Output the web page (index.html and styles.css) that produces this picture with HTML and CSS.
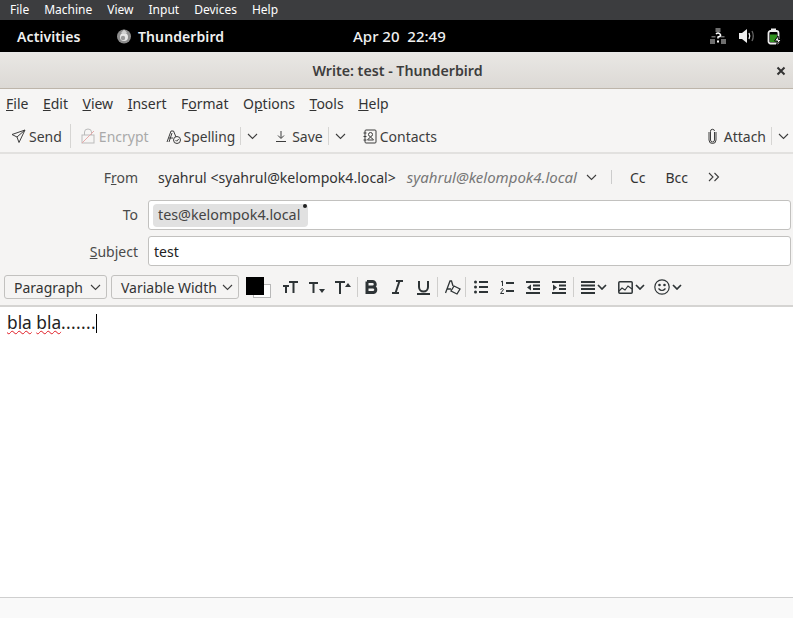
FILE: index.html
```html
<!DOCTYPE html>
<html lang="en">
<head>
<meta charset="utf-8">
<title>Write: test - Thunderbird</title>
<link rel="stylesheet" href="styles.css">
</head>
<body>
<div class="vm-menu">
  <span>File</span><span>Machine</span><span>View</span><span>Input</span><span>Devices</span><span>Help</span>
</div>
<div class="panel">
  <span class="activities">Activities</span>
  <span class="app">
    <svg class="app-icon" width="16" height="16" viewBox="0 0 16 16"><circle cx="8" cy="8.500" r="7" fill="#8d8d8d"/><circle cx="8" cy="9" r="4" fill="#e8e8e8"/><path d="M8 1.500l3 3-2.500 1.500L5 5z" fill="#d0d0d0"/><circle cx="7" cy="10" r="2.200" fill="#9a9a9a"/></svg>
    <span>Thunderbird</span>
  </span>
  <span class="clock">Apr 20&nbsp; 22:49</span>
  <span class="tray">
    <svg width="16" height="16" viewBox="0 0 16 16" fill="#6e6e6e"><rect x="5.500" y="0" width="5" height="4"/><rect x="0" y="11" width="5" height="5"/><rect x="11" y="11" width="5" height="5"/><rect x="1.500" y="8" width="4" height="1.500"/><rect x="10.500" y="8" width="4" height="1.500"/><path d="M6 6q2-2 4 0t-2 3v1.500" stroke="#fff" stroke-width="1.500" fill="none"/><rect x="7" y="12.500" width="2" height="2" fill="#fff"/></svg>
    <svg width="17" height="16" viewBox="0 0 17 16"><path d="M1 5h3l5-4v14l-5-4H1z" fill="#eee"/><path d="M11 5q1.500 3 0 6" stroke="#eee" stroke-width="1.300" fill="none"/><path d="M14 3q2.500 5 0 10" stroke="#666" stroke-width="1.300" fill="none"/></svg>
    <svg width="15" height="17" viewBox="0 0 15 17"><rect x="1.500" y="3" width="10" height="12.500" rx="2" fill="none" stroke="#eee" stroke-width="1.800"/><rect x="4" y="0.500" width="5" height="2.500" fill="#eee"/><rect x="3" y="6.500" width="7" height="7.500" fill="#2f8f1e"/><path d="M11 8l-3.500 5h3l-1 4 5-5.500h-3z" fill="#eee" stroke="#000" stroke-width="1"/></svg>
  </span>
</div>
<div class="titlebar">
  <span class="title">Write: test - Thunderbird</span>
  <svg class="close" width="10" height="10" viewBox="0 0 10 10"><path d="M1.500 1.500l7 7m0-7l-7 7" stroke="#333" stroke-width="2"/></svg>
</div>
<nav class="menubar">
  <span><u>F</u>ile</span><span><u>E</u>dit</span><span><u>V</u>iew</span><span><u>I</u>nsert</span><span>F<u>o</u>rmat</span><span>O<u>p</u>tions</span><span><u>T</u>ools</span><span><u>H</u>elp</span>
</nav>
<div class="toolbar">
  <span class="tool t-send">
    <svg width="15" height="15" viewBox="0 0 15 15" class="ic"><path d="M14 1L1 5.500l5 2.500 2 5.500zM14 1L6 8" fill="none"/></svg>
    <span>Send</span>
  </span>
  <i class="sep sep-send"></i>
  <span class="tool t-encrypt">
    <svg width="14" height="16" viewBox="0 0 14 16" class="ic ic-off"><rect x="1" y="7" width="12" height="8" fill="none"/><path d="M3.500 7V4a3.500 3 0 0 1 7 0v3" fill="none"/><path d="M1 15L13 3" stroke="#e7a9a9" fill="none"/></svg>
    <span>Encrypt</span>
  </span>
  <span class="tool t-spell">
    <svg width="15" height="15" viewBox="0 0 15 15" class="ic"><path d="M1 13L5 2h2.500l2.500 6M3 9h4" fill="none"/><path d="M3 13l3-9" fill="none"/><circle cx="11" cy="11" r="3.500" fill="none"/><path d="M9.500 11l1.200 1.200 2-2.200" fill="none"/></svg>
    <span class="spell-text">Spelling</span>
  </span>
  <i class="sep sep-spell"></i>
  <svg class="chev chev-spell" width="11" height="7" viewBox="0 0 11 7"><path d="M1 1l4.500 4.500L10 1"/></svg>
  <span class="tool t-save">
    <svg width="12" height="14" viewBox="0 0 12 14" class="ic"><path d="M6 2v7M3 6.500L6 9.500l3-3M1 12.500h10" fill="none"/></svg>
    <span>Save</span>
  </span>
  <i class="sep sep-save"></i>
  <svg class="chev chev-save" width="11" height="7" viewBox="0 0 11 7"><path d="M1 1l4.500 4.500L10 1"/></svg>
  <span class="tool t-contacts">
    <svg width="14" height="15" viewBox="0 0 14 15" class="ic"><rect x="2" y="1" width="11" height="13" rx="1" fill="none"/><path d="M0.500 4h3M0.500 7.500h3M0.500 11h3" fill="none"/><circle cx="7.500" cy="5.500" r="2" fill="none"/><path d="M4.500 11q3-5 6 0z" fill="none"/></svg>
    <span>Contacts</span>
  </span>
  <span class="tool t-attach">
    <svg width="9" height="16" viewBox="0 0 9 16" class="ic"><path d="M6.500 4v8a2 2 0 0 1-4 0V3.500a2 2 0 0 1 4-.5M1 4v8a3.500 3.500 0 0 0 7 0V4" fill="none"/></svg>
    <span>Attach</span>
  </span>
  <i class="sep sep-attach"></i>
  <svg class="chev chev-attach" width="11" height="7" viewBox="0 0 11 7"><path d="M1 1l4.500 4.500L10 1"/></svg>
</div>
<section class="header">
  <div class="row row-from">
    <label class="lbl">F<u>r</u>om</label>
    <span class="from-name">syahrul &lt;syahrul@kelompok4.local&gt;</span>
    <em class="from-addr">syahrul@kelompok4.local</em>
    <svg class="chev chev-from" width="11" height="7" viewBox="0 0 11 7"><path d="M1 1l4.500 4.500L10 1"/></svg>
    <i class="sep sep-from"></i>
    <span class="cc">Cc</span>
    <span class="bcc">Bcc</span>
    <svg class="more" width="12" height="10" viewBox="0 0 12 10"><path d="M1 1l4 4-4 4M6.500 1l4 4-4 4" fill="none" stroke="#3d3d3d" stroke-width="1.100"/></svg>
  </div>
  <div class="row row-to">
    <label class="lbl">To</label>
    <div class="field field-to"><span class="pill">tes@kelompok4.local<i class="dot"></i></span></div>
  </div>
  <div class="row row-subject">
    <label class="lbl"><u>S</u>ubject</label>
    <div class="field field-subject">test</div>
  </div>
  <div class="format">
    <span class="select sel-para">Paragraph<svg class="chev" width="11" height="7" viewBox="0 0 11 7"><path d="M1 1l4.500 4.500L10 1"/></svg></span>
    <span class="select sel-font">Variable Width<svg class="chev" width="11" height="7" viewBox="0 0 11 7"><path d="M1 1l4.500 4.500L10 1"/></svg></span>
    <span class="swatch"><i class="sw-bg"></i><i class="sw-fg"></i></span>
    <span class="fi fi-1"><svg width="17" height="14" viewBox="0 0 17 14" class="fic"><path d="M1 6h6M4 6v7M7 2h9M11.500 2v11"/></svg></span>
    <span class="fi fi-2"><svg width="17" height="13" viewBox="0 0 17 13" class="fic"><path d="M1 2h9M5.500 2v10"/><path d="M11 8h6l-3 4z" class="solid"/></svg></span>
    <span class="fi fi-3"><svg width="17" height="15" viewBox="0 0 17 15" class="fic"><path d="M1 2h10M6 2v12"/><path d="M11 7h6l-3-4z" class="solid"/></svg></span>
    <i class="sep sep-a"></i>
    <span class="fi fi-b"><svg width="13" height="14" viewBox="0 0 13 14"><path d="M2 1.500h5.500a2.700 2.700 0 0 1 0 5.500H2m0 0h6.500a2.800 2.800 0 0 1 0 5.500H2zv-5.500" fill="none" stroke="#2e3436" stroke-width="3"/></svg></span>
    <span class="fi fi-i"><svg width="11" height="14" viewBox="0 0 11 14" class="fic"><path d="M4 1h7M0 13h7M7.500 1L3.500 13"/></svg></span>
    <span class="fi fi-u"><svg width="13" height="15" viewBox="0 0 13 15" class="fic"><path d="M2 1v6a4.500 4.500 0 0 0 9 0V1M0 14h13"/></svg></span>
    <i class="sep sep-b"></i>
    <span class="fi fi-e"><svg width="16" height="15" viewBox="0 0 16 15" fill="none" stroke="#2e3436" stroke-width="1.300"><path d="M0.500 13L5 1h1.500l1.500 5M2 9h4"/><path d="M9 6l6 3-3 5-6-3z"/></svg></span>
    <i class="sep sep-c"></i>
    <span class="fi fi-ul"><svg width="14" height="14" viewBox="0 0 14 14" class="fic"><path d="M5 2h9M5 7h9M5 12h9"/><circle cx="1.500" cy="2" r="1.500" class="solid"/><circle cx="1.500" cy="7" r="1.500" class="solid"/><circle cx="1.500" cy="12" r="1.500" class="solid"/></svg></span>
    <span class="fi fi-ol"><svg width="14" height="15" viewBox="0 0 14 15" class="fic"><path d="M6 3h8M6 11h8"/><path d="M1 2l1.500-1v5M0.500 9.500q2-2 3 0l-3 4h3.500" class="thin"/></svg></span>
    <span class="fi fi-out"><svg width="14" height="13" viewBox="0 0 14 13" class="fic"><path d="M0 1h14M7 4.500h7M7 8h7M0 12h14"/><path d="M5 3.500L1 6.500l4 3z" class="solid"/></svg></span>
    <span class="fi fi-in"><svg width="14" height="13" viewBox="0 0 14 13" class="fic"><path d="M0 1h14M7 4.500h7M7 8h7M0 12h14"/><path d="M1 3.500L5 6.500l-4 3z" class="solid"/></svg></span>
    <i class="sep sep-d"></i>
    <span class="fi fi-al"><svg width="14" height="13" viewBox="0 0 14 13" class="fic"><path d="M0 1h14M0 4.500h14M0 8h14M0 12h14"/></svg><svg class="mini" width="10" height="6" viewBox="0 0 10 6"><path d="M1 1l4 4 4-4"/></svg></span>
    <span class="fi fi-img"><svg width="15" height="13" viewBox="0 0 15 13" fill="none" stroke="#2e3436" stroke-width="1.500"><rect x="0.800" y="0.800" width="13.400" height="11.400" rx="1"/><path d="M1 10l3-3 3 2 3-4 4 3" stroke-width="1.100"/></svg><svg class="mini" width="10" height="6" viewBox="0 0 10 6"><path d="M1 1l4 4 4-4"/></svg></span>
    <span class="fi fi-emo"><svg width="16" height="16" viewBox="0 0 16 16" fill="none" stroke="#2e3436" stroke-width="1.200"><circle cx="8" cy="8" r="7.200"/><path d="M4.500 9.500q3.500 4 7 0"/><circle cx="5.500" cy="6" r=".7"/><circle cx="10.500" cy="6" r=".7"/></svg><svg class="mini" width="10" height="6" viewBox="0 0 10 6"><path d="M1 1l4 4 4-4"/></svg></span>
  </div>
</section>
<main class="editor">
  <span class="misspelt">bla</span> <span class="misspelt">bla</span><span class="dots">.......</span><i class="caret"></i>
</main>
<footer class="status"></footer>
</body>
</html>
```
FILE: styles.css
```css
* { box-sizing: border-box; }
html, body { margin: 0; padding: 0; }
body {
  width: 793px;
  height: 618px;
  overflow: hidden;
  display: flex;
  flex-direction: column;
  background: #fff;
  font-family: "Noto Sans", sans-serif;
  color: #2e3436;
}
svg { display: block; flex: none; }
i { font-style: normal; display: block; flex: none; }

.vm-menu {
  height: 20px;
  background: #3c3d3f;
  color: #fff;
  font-size: 12px;
  display: flex;
  align-items: center;
  gap: 15px;
  padding: 0 0 1px 10px;
}
.panel {
  height: 33px;
  background: #000;
  border-bottom: 1px solid #e8e8e8;
  color: #f0f0f0;
  font-size: 14px;
  font-weight: 600;
  display: flex;
  align-items: center;
  position: relative;
  padding-left: 17px;
}
.activities { width: 99px; letter-spacing: .1px; }
.app { display: flex; align-items: center; gap: 6px; letter-spacing: .1px; }
.clock { position: absolute; left: 353px; font-size: 15px; font-weight: 500; }
.tray { position: absolute; left: 710px; display: flex; align-items: center; gap: 12px; }

.titlebar {
  height: 36px;
  background: linear-gradient(#e9e7e4, #dcd9d5);
  border-bottom: 1px solid #bdb5aa;
  display: flex;
  align-items: center;
  justify-content: center;
  position: relative;
  padding: 0 0 1px 2px;
}
.title { font-size: 14.200px; font-weight: 600; color: #3d3d3d; }
.close { position: absolute; left: 776px; top: 13px; }

.menubar {
  height: 29px;
  background: #f6f5f4;
  font-size: 14px;
  display: flex;
  align-items: center;
  gap: 14.500px;
  padding-left: 6px;
  color: #333;
}
.toolbar {
  height: 36px;
  background: #f6f5f4;
  border-bottom: 2px solid #e2e1df;
  font-size: 14px;
  display: flex;
  align-items: center;
  color: #3d3d3d;
  padding: 2px 0 0 11px;
}
.tool { display: flex; align-items: center; gap: 3px; }
.ic { stroke: #3d3d3d; stroke-width: 1; }
.ic-off { stroke: #bbb; }
.t-encrypt { color: #a9a9a9; gap: 4px; margin-left: 10px; }
.t-spell { margin-left: 17px; gap: 3px; }
.spell-text { font-size: 13.800px; }
.t-save { margin-left: 17px; gap: 5px; }
.t-contacts { margin-left: 17px; gap: 3px; }
.t-attach { margin-left: auto; gap: 7px; }
.sep { width: 1px; height: 18px; background: #d6d5d3; }
.sep-send { height: 24px; margin-left: 8px; }
.sep-spell { margin-left: 5px; }
.sep-save { margin-left: 5px; }
.sep-attach { margin-left: 5px; }
.chev { fill: none; stroke: #3d3d3d; stroke-width: 1.100; }
.chev-spell { margin-left: 6px; }
.chev-save { margin-left: 6px; }
.chev-attach { margin-left: 6px; margin-right: 4px; }

.header {
  height: 153px;
  background: #f5f4f3;
  border-bottom: 2px solid #d5d4d2;
  display: flex;
  flex-direction: column;
  font-size: 14px;
}
.row { display: flex; align-items: center; }
.lbl { width: 138px; text-align: right; color: #4a4a4a; flex: none; }
.row-to .lbl { padding-bottom: 2px; }
.row-from { height: 46px; color: #333; }
.from-name { margin-left: 20px; font-size: 14.100px; }
.from-addr { margin-left: 11px; color: #777; font-size: 15px; }
.chev-from { margin-left: 9px; }
.sep-from { height: 14px; margin-left: 14px; background: #ccc; }
.cc { margin-left: 18px; }
.bcc { margin-left: 20px; }
.more { margin-left: 20px; }
.row-to { height: 30px; margin-bottom: 6px; }
.row-subject { height: 30px; }
.field {
  flex: none;
  width: 643px;
  height: 30px;
  margin-left: 10px;
  background: #fff;
  border: 1px solid #c2c1bf;
  border-radius: 3px;
  display: flex;
  align-items: center;
}
.field-to { padding-left: 4px; }
.field-subject { padding: 0 0 0 5px; color: #222; }
.pill {
  position: relative;
  height: 23px;
  padding: 0 8px 0 5px;
  font-size: 14.300px;
  line-height: 21px;
  background: #e1e1e1;
  border-radius: 4px;
  color: #444;
}
.dot {
  position: absolute;
  right: 1px;
  top: 0;
  width: 4px;
  height: 4px;
  border-radius: 50%;
  background: #222;
}
.format {
  display: flex;
  align-items: center;
  height: 24px;
  margin-top: 9px;
  padding-left: 4px;
}
.select {
  height: 24px;
  border: 1px solid #c2c1bf;
  border-radius: 3px;
  display: flex;
  align-items: center;
  justify-content: space-between;
  padding: 0 5px 0 9px;
  color: #333;
}
.sel-para { width: 103px; }
.sel-font { width: 128px; margin-left: 4px; }
.swatch { position: relative; width: 25px; height: 21px; margin-left: 7px; flex: none; }
.sw-fg { position: absolute; left: 0; top: 0; width: 18px; height: 18px; background: #000; }
.sw-bg { position: absolute; left: 7px; top: 7px; width: 18px; height: 14px; background: #fff; border: 1px solid #b8b8b8; }
.fi { display: flex; align-items: center; gap: 2px; flex: none; }
.fic { fill: none; stroke: #2e3436; stroke-width: 2; }
.fic .solid { fill: #2e3436; stroke: none; }
.fic .thin { stroke-width: 1; }
.mini { fill: none; stroke: #2e3436; stroke-width: 1.700; }
.format .sep { height: 20px; background: #cfcecc; }
.fi-1 { margin-left: 11px; }
.fi-2 { margin-left: 9px; }
.fi-3 { margin-left: 9px; }
.sep-a { margin-left: 6px; }
.fi-b { margin-left: 7px; }
.fi-i { margin-left: 14px; }
.fi-u { margin-left: 14px; }
.sep-b { margin-left: 7px; }
.fi-e { margin-left: 7px; }
.sep-c { margin-left: 4px; }
.fi-ul { margin-left: 8px; }
.fi-ol { margin-left: 12px; }
.fi-out { margin-left: 12px; }
.fi-in { margin-left: 12px; }
.sep-d { margin-left: 7px; }
.fi-al { margin-left: 7px; }
.fi-img { margin-left: 11px; }
.fi-emo { margin-left: 9px; }

.editor {
  flex: 1;
  background: #fff;
  padding: 4px 0 0 7px;
  font-size: 17.300px;
  line-height: 24px;
  color: #222;
}
.misspelt { text-decoration: underline wavy #e01b24 1.300px; text-underline-offset: 1px; }
.dots { letter-spacing: .35px; }
.caret { display: inline-block; width: 1px; height: 19px; background: #000; vertical-align: -4px; }
.status {
  height: 21px;
  flex: none;
  background: #f9f9f9;
  border-top: 1px solid #cfcfcf;
}
```
